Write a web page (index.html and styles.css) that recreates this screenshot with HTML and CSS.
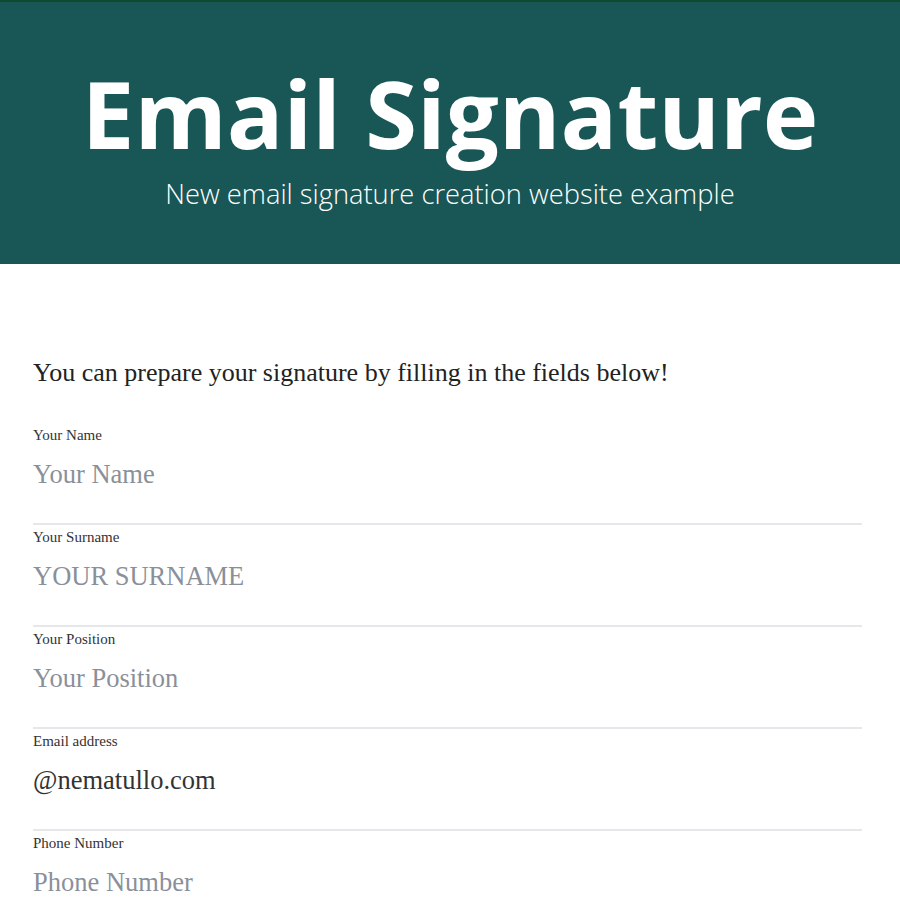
FILE: index.html
```html
<!DOCTYPE html>
<html lang="en">
<head>
<meta charset="utf-8">
<title>Email Signature</title>
<link rel="stylesheet" href="styles.css">
</head>
<body>
<header class="hero">
  <h1 class="hero-title">Email Signature</h1>
  <p class="hero-sub">New email signature creation website example</p>
</header>
<main class="content">
  <p class="intro">You can prepare your signature by filling in the fields below!</p>
  <form class="form">
    <div class="field">
      <label class="field-label" for="name">Your Name</label>
      <input class="field-input" id="name" type="text" placeholder="Your Name">
    </div>
    <div class="field">
      <label class="field-label" for="surname">Your Surname</label>
      <input class="field-input" id="surname" type="text" placeholder="YOUR SURNAME">
    </div>
    <div class="field">
      <label class="field-label" for="position">Your Position</label>
      <input class="field-input" id="position" type="text" placeholder="Your Position">
    </div>
    <div class="field">
      <label class="field-label" for="email">Email address</label>
      <input class="field-input" id="email" type="text" value="@nematullo.com">
    </div>
    <div class="field">
      <label class="field-label" for="phone">Phone Number</label>
      <input class="field-input" id="phone" type="text" placeholder="Phone Number">
    </div>
  </form>
</main>
</body>
</html>
```
FILE: styles.css
```css
* { box-sizing: border-box; }
html, body { margin: 0; padding: 0; background: #ffffff; }
body { font-family: "Liberation Serif", "DejaVu Serif", serif; color: #2b2b2b; }

.hero {
  background: #195656;
  border-top: 2px solid #0d4a30;
  height: 264px;
  display: flex;
  flex-direction: column;
  align-items: center;
  color: #ffffff;
  font-family: "Open Sans", sans-serif;
}
.hero-title {
  margin: 0;
  padding-top: 61px;
  font-size: 94px;
  line-height: 100px;
  font-weight: 700;
}
.hero-sub {
  margin: 0;
  margin-top: 11px;
  font-size: 27.3px;
  line-height: 40px;
  font-weight: 300;
}

.content {
  padding: 0 38px 0 33px;
}
.intro {
  margin: 0;
  padding-top: 93px;
  font-size: 26px;
  line-height: 32px;
  color: #222222;
}
.form { margin-top: 34px; }
.field { display: flex; flex-direction: column; }
.field-label {
  margin-top: 2px;
  font-size: 15px;
  line-height: 20px;
  color: #333333;
}
.field-input {
  border: 0;
  border-bottom: 2px solid #e5e7eb;
  outline: none;
  padding: 15px 0 35px 0;
  height: 80px;
  font-family: inherit;
  font-size: 26.5px;
  line-height: 28px;
  color: #333333;
  background: transparent;
}
.field-input::placeholder { color: #8a9099; opacity: 1; }
```
